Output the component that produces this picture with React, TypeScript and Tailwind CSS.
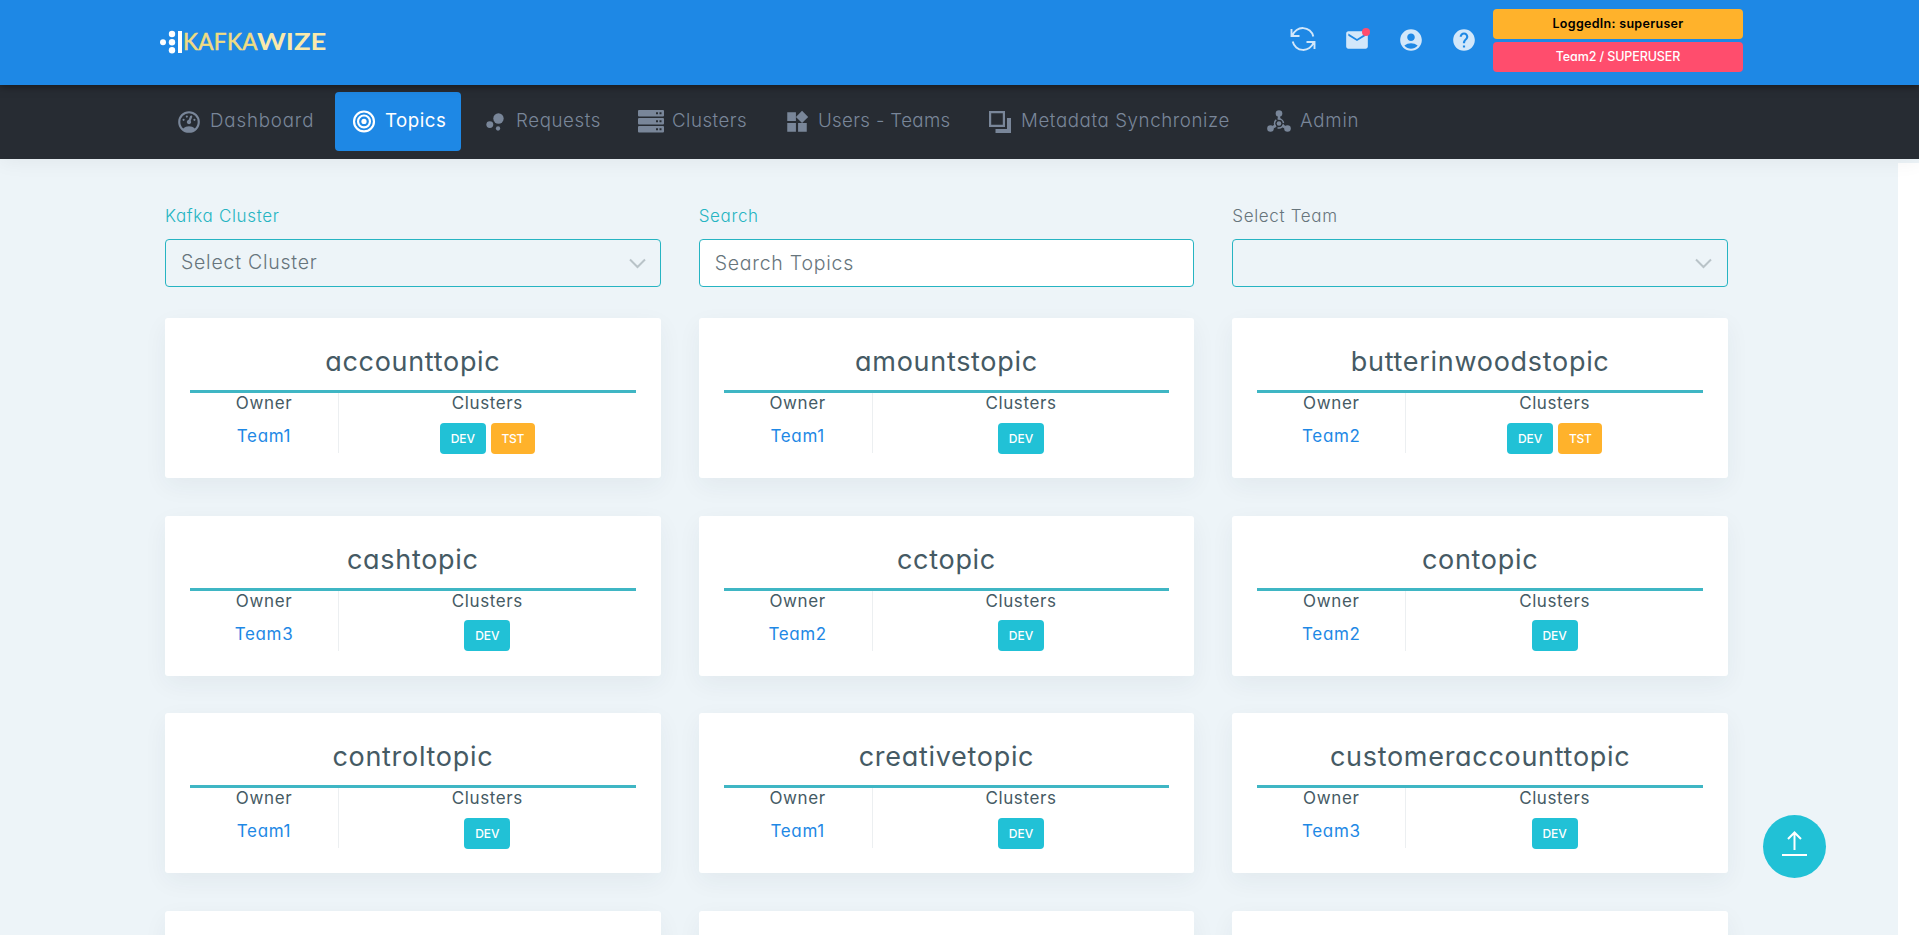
import React from 'react';
import { MdAccountCircle, MdBubbleChart, MdEmail, MdHelp, MdWidgets } from 'react-icons/md';

type Topic = { name: string; owner: string; test?: boolean };

const topics: Topic[] = [
  { name: 'accounttopic', owner: 'Team1', test: true },
  { name: 'amountstopic', owner: 'Team1' },
  { name: 'butterinwoodstopic', owner: 'Team2', test: true },
  { name: 'cashtopic', owner: 'Team3' },
  { name: 'cctopic', owner: 'Team2' },
  { name: 'contopic', owner: 'Team2' },
  { name: 'controltopic', owner: 'Team1' },
  { name: 'creativetopic', owner: 'Team1' },
  { name: 'customeraccounttopic', owner: 'Team3' },
];

function Logo() {
  return (
    <div className="flex h-[26px] items-center">
      <svg width="23" height="24" viewBox="0 0 23 24" fill="#fff">
        <circle cx="3" cy="12.3" r="3" />
        <circle cx="12" cy="4" r="3.2" />
        <circle cx="12" cy="12.3" r="3.2" />
        <circle cx="12" cy="20.3" r="3.2" />
        <rect x="18" y="1" width="4" height="22" />
      </svg>
      <span className="w-[74px] font-['Lato'] text-[22.5px] leading-none tracking-[0.35px] whitespace-nowrap text-[#f0dc82] [-webkit-text-stroke:0.5px_#f0dc82]">KAFKA</span>
      <span className="origin-left scale-x-[1.22] font-['Lato'] text-[22.5px] leading-none font-bold text-[#f9e9ac]">WIZE</span>
    </div>
  );
}

const GaugeIcon = () => (
  <svg width="26" height="26" viewBox="0 0 24 24" fill="currentColor">
    <path d="M12,2A10,10 0 0,0 2,12A10,10 0 0,0 12,22A10,10 0 0,0 22,12A10,10 0 0,0 12,2M12,4A8,8 0 0,1 20,12C20,14.4 19,16.5 17.3,18C15.9,16.7 14,16 12,16C10,16 8.2,16.7 6.7,18C5,16.5 4,14.4 4,12A8,8 0 0,1 12,4M14,5.89C13.62,5.9 13.26,6.15 13.1,6.54L11.81,9.77L11.71,10C11,10.13 10.41,10.6 10.14,11.26C9.73,12.29 10.23,13.45 11.26,13.86C12.29,14.27 13.45,13.77 13.86,12.74C14.12,12.08 14,11.32 13.57,10.76L13.67,10.5L14.96,7.29L14.97,7.26C15.17,6.75 14.92,6.17 14.41,5.96C14.28,5.91 14.15,5.89 14,5.89M10,6A1,1 0 0,0 9,7A1,1 0 0,0 10,8A1,1 0 0,0 11,7A1,1 0 0,0 10,6M7,9A1,1 0 0,0 6,10A1,1 0 0,0 7,11A1,1 0 0,0 8,10A1,1 0 0,0 7,9M17,9A1,1 0 0,0 16,10A1,1 0 0,0 17,11A1,1 0 0,0 18,10A1,1 0 0,0 17,9Z" />
  </svg>
);

const TargetIcon = () => (
  <svg width="26" height="26" viewBox="0 0 24 24" fill="none" stroke="currentColor" strokeWidth="2">
    <circle cx="12" cy="11.5" r="9.2" />
    <circle cx="12" cy="11.5" r="5.5" />
    <circle cx="12" cy="11.5" r="2.4" fill="currentColor" stroke="none" />
  </svg>
);

const ServersIcon = () => (
  <svg width="26" height="23" viewBox="0 0 26 23" fill="currentColor">
    {[0, 8, 16].map((y) => (
      <path key={y} fillRule="evenodd" d={`M1 ${y}h24a1 1 0 0 1 1 1v4.5a1 1 0 0 1-1 1H1a1 1 0 0 1-1-1V${y + 1}a1 1 0 0 1 1-1zM18 ${y + 2.2}v2h2v-2zM21.5 ${y + 2.2}v2h2v-2z`} />
    ))}
  </svg>
);

const LayersIcon = () => (
  <svg width="22" height="22" viewBox="0 0 22 22" fill="currentColor">
    <path fillRule="evenodd" d="M0 0h16v16H0zM2.2 2.2v11.6h11.6V2.2zM18 7h4v15H6.500v-4H18z" />
  </svg>
);

const HubIcon = () => (
  <svg width="24" height="23" viewBox="0 0 24 23" fill="currentColor">
    <circle cx="12" cy="3.5" r="3.3" />
    <circle cx="3.5" cy="18.500" r="3.3" />
    <circle cx="20.500" cy="18.500" r="3.3" />
    <circle cx="12" cy="13.500" r="2.300" />
    <circle cx="12" cy="13.500" r="4.500" fill="none" stroke="currentColor" strokeWidth="1.500" strokeDasharray="7.400 2" strokeDashoffset="-1" />
    <path d="M11 6h2l.6 3.500h-3.200zM5.500 16l2.500-1.700 1.500 2.500-3 1.700zM18.500 16L16 14.300l-1.500 2.500 3 1.700z" />
  </svg>
);

const RefreshIcon = () => (
  <svg width="26" height="24" viewBox="0 0 26 24" fill="none" stroke="currentColor" strokeWidth="1.900">
    <path d="M1.500 2v7h8M2.500 8.500A10.800 10.800 0 0 1 23.300 9.500M24.500 22v-7h-8M23.500 15.500A10.800 10.800 0 0 1 2.700 14.500" />
  </svg>
);

function NavItem({ icon, label, className, text }: { icon: React.ReactNode; label: string; className: string; text: string }) {
  return (
    <a className={`flex h-[59px] shrink-0 items-center rounded ${className}`}>
      <span className="flex w-[26px] shrink-0 justify-center">{icon}</span>
      <span className={`-mt-px ml-[8px] text-[18.7px] whitespace-nowrap ${text}`}>{label}</span>
    </a>
  );
}

function Chevron() {
  return (
    <svg width="17" height="11" viewBox="0 0 17 11" fill="none" stroke="#b9c3c8" strokeWidth="2">
      <path d="M1 1.500l7.500 7.500L16 1.500" />
    </svg>
  );
}

function Field({ label, labelClass, children }: { label: string; labelClass: string; children: React.ReactNode }) {
  return (
    <label className="block">
      <span className={`block h-[34px] text-[17px] leading-[22px] font-light tracking-[0.65px] ${labelClass}`}>{label}</span>
      {children}
    </label>
  );
}

function TopicCard({ topic }: { topic: Topic }) {
  return (
    <article className="h-[160px] rounded-[3px] bg-white px-[25px] pt-[23px] shadow-[0_8px_25px_rgba(40,60,80,0.055)]">
      <h2 className="h-[49px] text-center text-[27px] leading-[42px] font-normal tracking-[0.7px] text-[#455a64]">{topic.name}</h2>
      <div className="h-[3px] bg-[#3fb6c4]" />
      <div className="flex h-[60px] text-center text-[17px] font-normal text-[#455a64]">
        <div className="w-[149px] border-r border-[#eceff1] tracking-[0.65px]">
          <div className="leading-[21px]">Owner</div>
          <div className="mt-3 leading-[21px] text-[#1e88e5]">{topic.owner}</div>
        </div>
        <div className="flex-1">
          <div className="leading-[21px] tracking-[0.6px]">Clusters</div>
          <div className="mt-[8.500px] flex justify-center gap-[5px] text-[12px] font-medium text-white">
            <span className="h-[31px] w-[46px] rounded bg-[#21c1d6] leading-[31px]">DEV</span>
            {topic.test && <span className="h-[31px] w-[44px] rounded bg-[#ffb22b] leading-[31px] tracking-[-0.3px]">TST</span>}
          </div>
        </div>
      </div>
    </article>
  );
}

export default function App() {
  return (
    <div className="relative h-[935px] overflow-hidden bg-[#edf4f8] font-['Inter',sans-serif] [font-feature-settings:'cv11']">
      <header className="relative z-20 flex h-[85px] bg-[#1e88e5] pl-[160px] shadow-[0_1px_8px_rgba(0,0,0,0.5)]">
        <div className="w-[1130px] pt-[29px]">
          <Logo />
        </div>
        <div className="flex w-[203px] pt-[27px] text-[#d2e7fa]">
          <div className="w-[54px]"><RefreshIcon /></div>
          <div className="relative w-[54px]">
            <MdEmail size={26} />
            <span className="absolute top-[1px] left-[18px] size-2 rounded-full bg-[#ff4d6d]" />
          </div>
          <div className="w-[53px]"><MdAccountCircle size={26} /></div>
          <div><MdHelp size={26} /></div>
        </div>
        <div className="flex w-[250px] flex-col gap-[3px] pt-[9px] text-center text-[12.5px] leading-[30px]">
          <div className="h-[30px] rounded bg-[#ffb22b] font-semibold tracking-[0.3px] text-black">LoggedIn: superuser</div>
          <div className="h-[30px] rounded bg-[#ff4d6d] font-medium tracking-[-0.1px] text-white">Team2 / SUPERUSER</div>
        </div>
      </header>

      <nav className="relative z-10 flex h-[74px] bg-[#272c33] pt-[7px] pl-[158px] font-light text-[#798699] shadow-[0_2px_20px_rgba(0,0,0,0.06)]">
        <NavItem icon={<GaugeIcon />} label="Dashboard" className="w-[177px] pl-[18px]" text="tracking-[0.85px]" />
        <NavItem icon={<TargetIcon />} label="Topics" className="w-[126px] bg-[#1e88e5] pl-[16px] text-white" text="font-normal tracking-[0.5px]" />
        <NavItem icon={<MdBubbleChart size={26} />} label="Requests" className="w-[177px] pl-[21px]" text="tracking-[0.6px]" />
        <NavItem icon={<ServersIcon />} label="Clusters" className="w-[146px]" text="tracking-[0.5px]" />
        <NavItem icon={<MdWidgets size={26} />} label="Users - Teams" className="w-[203px]" text="tracking-[0.35px]" />
        <NavItem icon={<LayersIcon />} label="Metadata Synchronize" className="w-[279px]" text="tracking-[0.6px]" />
        <NavItem icon={<HubIcon />} label="Admin" className="w-[120px]" text="tracking-[0.8px]" />
      </nav>

      <div className="flex h-[776px]">
        <main className="flex-1 pt-[46px] pl-[165px]">
          <section className="grid w-[1563px] grid-cols-3 gap-x-[38px]">
            <Field label="Kafka Cluster" labelClass="text-[#26b4c2]">
              <div className="flex h-[48px] items-center justify-between rounded border border-[#26b4c2] pr-[14px] pl-[15px] text-[19.500px] font-light tracking-[0.75px] text-[#67757c]">
                <span>Select Cluster</span>
                <Chevron />
              </div>
            </Field>
            <Field label="Search" labelClass="text-[#26b4c2]">
              <input
                className="block h-[48px] w-full rounded border border-[#26b4c2] bg-white px-[15px] text-[19.500px] font-light tracking-[0.75px] outline-none placeholder:text-[#67757c]"
                placeholder="Search Topics"
              />
            </Field>
            <Field label="Select Team" labelClass="text-[#67757c]">
              <div className="flex h-[48px] items-center justify-end rounded border border-[#26b4c2] pr-[15px]">
                <Chevron />
              </div>
            </Field>
          </section>

          <section className="mt-[31px] grid w-[1563px] grid-cols-3 gap-x-[38px] gap-y-[37.500px]">
            {topics.map((topic) => (
              <TopicCard key={topic.name} topic={topic} />
            ))}
            {[0, 1, 2].map((n) => (
              <div key={n} className="h-[160px] rounded-[3px] bg-white shadow-[0_8px_25px_rgba(40,60,80,0.055)]" />
            ))}
          </section>
        </main>
        <aside className="mt-1 w-[21px] bg-white" />
      </div>

      <button aria-label="Back to top" className="absolute top-[815px] left-[1763px] z-30 flex size-[63px] items-center justify-center rounded-full bg-[#21c1d6] pb-[6px] text-white">
        <svg width="25" height="25" viewBox="0 0 25 25" fill="none" stroke="currentColor" strokeWidth="2">
          <path d="M12.500 19V1.500M6 8l6.500-6.500L19 8M0 24h25" />
        </svg>
      </button>
    </div>
  );
}
